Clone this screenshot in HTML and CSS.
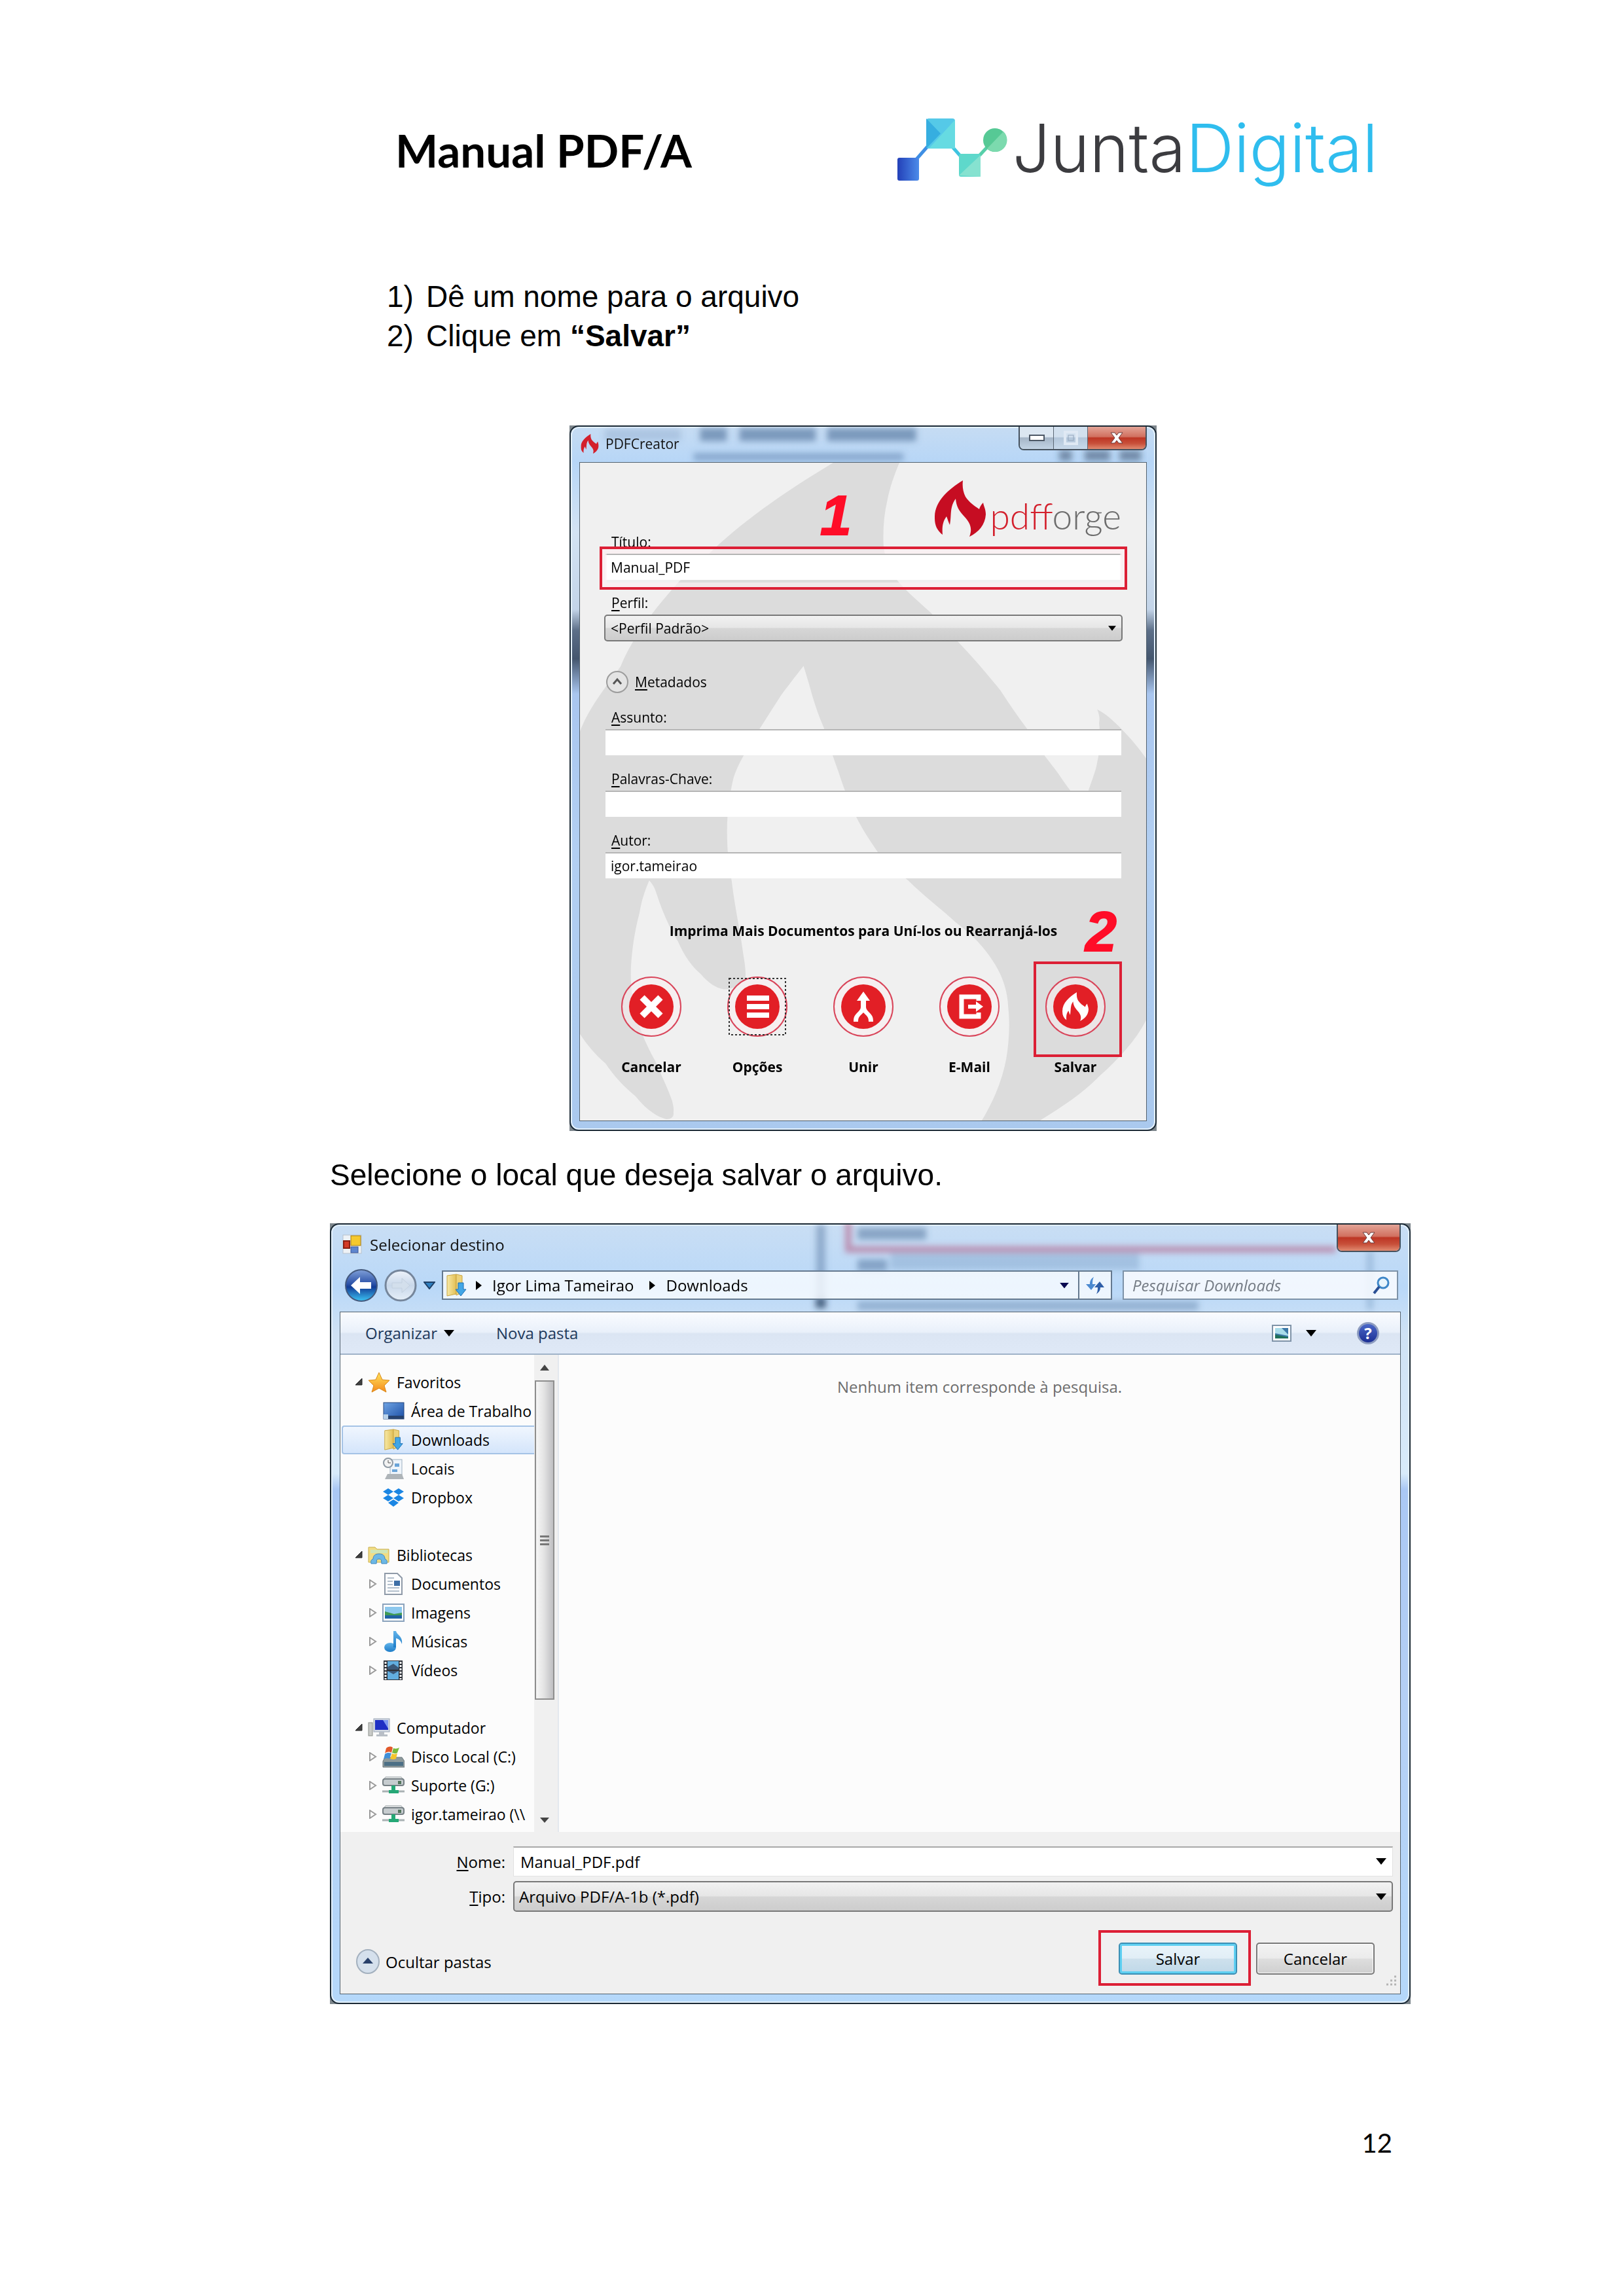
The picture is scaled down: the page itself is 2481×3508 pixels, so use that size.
FILE: index.html
```html
<!DOCTYPE html>
<html lang="pt-BR">
<head>
<meta charset="utf-8">
<meta name="viewport" content="width=device-width, initial-scale=1">
<title>Manual PDF/A</title>
<link rel="stylesheet" href="styles.css">
</head>
<body>
<svg class="defs" aria-hidden="true">
  <defs>
    <linearGradient id="gBlue" x1="0" y1="0" x2="1" y2="0"><stop offset="0" stop-color="#2340b8"/><stop offset="1" stop-color="#4c8cea"/></linearGradient>
    <linearGradient id="gBack" x1="0" y1="0" x2="0" y2="1"><stop offset="0" stop-color="#7f9fd8"/><stop offset=".45" stop-color="#2c52a8"/><stop offset=".55" stop-color="#123c96"/><stop offset="1" stop-color="#3cc4f4"/></linearGradient>
    <linearGradient id="gFwd" x1="0" y1="0" x2="0" y2="1"><stop offset="0" stop-color="#eef3fa"/><stop offset=".5" stop-color="#c9d8ea"/><stop offset="1" stop-color="#e6eff8"/></linearGradient>
    <linearGradient id="gFolder" x1="0" y1="0" x2="1" y2="0"><stop offset="0" stop-color="#f7e9a6"/><stop offset="1" stop-color="#e2bf55"/></linearGradient>
    <linearGradient id="gStar" x1="0" y1="0" x2="0" y2="1"><stop offset="0" stop-color="#ffe45c"/><stop offset="1" stop-color="#f58a1c"/></linearGradient>
    <linearGradient id="gScreen" x1="0" y1="0" x2="1" y2="1"><stop offset="0" stop-color="#6fa4e4"/><stop offset="1" stop-color="#1c4fa6"/></linearGradient>
    <linearGradient id="gNote" x1="0" y1="0" x2="0" y2="1"><stop offset="0" stop-color="#62b4ea"/><stop offset="1" stop-color="#1d7cc8"/></linearGradient>
    <filter id="soft" x="-20%" y="-60%" width="140%" height="220%"><feGaussianBlur stdDeviation="5"/></filter>
    <symbol id="flame" viewBox="0 0 78 86"><path d="M43 0C20 14-1 33 0 58c0 11 4 19 12 25-1-11 0-20 6-28 2 5 3 9 5 13 2-10 1-19 3-27 1-5 3-9 6-13 1 12 5 18 13 27 9 10 13 18 8 31 14-7 24-18 25-34 0-8-3-12-4-18-3 3-5 6-6 10-7-5-15-10-21-19C43 17 42 9 43 0z"/></symbol>
    <symbol id="download" viewBox="0 0 32 36"><path d="M2 3l14-2v30L2 34z" fill="url(#gFolder)" stroke="#c9a540"/><path d="M16 1l9 2v26l-9 4z" fill="#ecd27a" stroke="#c9a540"/><path d="M19 14h8v10h4l-8 10-8-10h4z" fill="#41a6e6" stroke="#1d6fb4"/></symbol>
    <symbol id="netdrive" viewBox="0 0 34 30"><path d="M5 2h24l4 5H1z" fill="#e8eaea" stroke="#9aa3a6"/><rect x="1" y="5" width="32" height="10" rx="3" fill="#c6cccf" stroke="#757f84" stroke-width="2"/><rect x="24" y="8" width="5" height="5" fill="#53755c"/><path d="M14 15h6v7h5v5H10v-5h4z" fill="#25a876"/><path d="M0 24h10M25 24h9" stroke="#a9b1b3" stroke-width="3"/></symbol>
    <symbol id="open" viewBox="0 0 12 12"><path d="M11 1v10H1z" fill="#404040" stroke="#222"/></symbol>
    <symbol id="shut" viewBox="0 0 12 14"><path d="M1 1l9 6-9 6z" fill="#fff" stroke="#9a9a9a" stroke-width="2"/></symbol>
    <symbol id="drop" viewBox="0 0 16 10"><path d="M0 0h16L8 10z"/></symbol>
  </defs>
</svg>

<main class="page">
  <header class="head">
    <h1>Manual PDF/A</h1>
    <div class="brand">
      <svg class="brand-mark" viewBox="1371 180 168 98" aria-hidden="true">
        <path d="M1388 257l49-56" stroke="#3f8fe4" stroke-width="5"/>
        <path d="M1437 204l44 50" stroke="#3fc4e0" stroke-width="5"/>
        <path d="M1481 254l39-42" stroke="#57cfa9" stroke-width="5"/>
        <rect x="1371" y="241" width="33" height="35" rx="3" fill="url(#gBlue)"/>
        <rect x="1415" y="181" width="44" height="46" rx="4" fill="#55c9e8"/>
        <path d="M1415 181l22 23-22 23z" fill="#36aee0"/><path d="M1459 183v44h-40z" fill="#66dbe2"/>
        <rect x="1465" y="235" width="33" height="35" rx="3" fill="#5ed8cb"/><path d="M1465 268l33-31v33z" fill="#86e2d0"/>
        <circle cx="1520" cy="214" r="18" fill="#56c995"/><path d="M1533 201a18 18 0 0 1-25 26z" fill="#7cdaae"/>
      </svg>
      <p class="brand-name">Junta<span>Digital</span></p>
    </div>
  </header>

  <ol class="steps">
    <li>Dê um nome para o arquivo</li>
    <li>Clique em <b>“Salvar”</b></li>
  </ol>

  <section class="corner creator">
    <div class="window">
      <div class="titlebar stack">
        <svg class="ghost" viewBox="0 0 893 54" preserveAspectRatio="none" aria-hidden="true">
          <g filter="url(#soft)"><path d="M40 12h120" stroke="#4d6f98" stroke-width="17" opacity=".2"/><path d="M190 12h42M252 12h120M390 12h140" stroke="#4d6f98" stroke-width="20" opacity=".6"/><path d="M180 46h330" stroke="#5b7ea8" stroke-width="12" opacity=".5"/><path d="M755 44h20M795 44h40M850 44h34" stroke="#2e435e" stroke-width="16" opacity=".5"/></g>
        </svg>
        <div class="bar">
          <svg class="app-flame" viewBox="0 0 78 86" aria-hidden="true"><use href="#flame" width="78" height="86"/></svg>
          <span class="caption">PDFCreator</span>
          <div class="sys">
            <button type="button" class="sys-btn" aria-label="Minimizar"><svg width="26" height="12" viewBox="0 0 26 12"><rect x="2" y="2" width="22" height="8" fill="#fff" stroke="#4d5866" stroke-width="2"/></svg></button>
            <button type="button" class="sys-btn pale" aria-label="Maximizar"><svg width="22" height="22" viewBox="0 0 22 22"><rect x="2" y="2" width="18" height="18" fill="none" stroke="#dfe9f4" stroke-width="4"/><rect x="7" y="7" width="8" height="8" fill="none" stroke="#93a5bb"/></svg></button>
            <button type="button" class="sys-btn close" aria-label="Fechar"><svg width="20" height="18" viewBox="0 0 20 18"><path d="M1 1h6l3 4 3-4h6l-6 8 6 8h-6l-3-4-3 4H1l6-8z" fill="#fff" stroke="#6b3a3a"/></svg></button>
          </div>
        </div>
      </div>
      <div class="client stack">
        <svg class="backdrop" viewBox="886 707 866 1003" preserveAspectRatio="none" aria-hidden="true">
          <path fill="#dcdcdc" fill-rule="evenodd" d="M1275 706C1200 750 1130 800 1083 846C1060 865 1048 878 1036 890C1000 930 965 975 948 1018C925 1050 900 1080 886 1117V1578C897 1595 910 1610 925 1623C940 1645 955 1660 971 1673C985 1690 1000 1703 1018 1708C1026 1708 1030 1704 1029 1698C1030 1690 1028 1685 1027 1680C1020 1660 1010 1640 1001 1619C985 1590 975 1565 971 1544C965 1520 963 1500 964 1476C966 1445 970 1420 977 1394C980 1375 985 1360 992 1344C996 1348 999 1353 1001 1358C1010 1385 1020 1412 1036 1437C1045 1458 1057 1475 1071 1487C1082 1500 1094 1508 1106 1510C1120 1510 1132 1503 1139 1494C1140 1480 1138 1470 1136 1458C1131 1420 1122 1380 1118 1344C1113 1320 1111 1295 1111 1269C1111 1240 1115 1212 1121 1187C1125 1175 1130 1165 1136 1154C1144 1140 1152 1126 1162 1111C1172 1095 1183 1078 1194 1061C1204 1048 1216 1032 1228 1017C1232 1030 1237 1046 1241 1061C1246 1078 1252 1095 1259 1111C1266 1135 1274 1158 1282 1180C1290 1205 1299 1227 1309 1248C1319 1268 1330 1284 1341 1300C1356 1318 1372 1331 1388 1344C1410 1366 1438 1387 1461 1408C1484 1425 1502 1443 1517 1466C1532 1488 1540 1512 1541 1537C1544 1565 1542 1592 1538 1616C1532 1648 1519 1680 1500 1711H1588C1622 1690 1656 1668 1682 1641C1710 1616 1736 1588 1752 1557V1158C1738 1138 1722 1120 1705 1104C1696 1095 1687 1088 1677 1083C1681 1092 1681 1098 1680 1104C1682 1122 1681 1138 1679 1154C1677 1164 1676 1172 1673 1180C1669 1192 1664 1205 1656 1232C1640 1212 1628 1197 1617 1180L1597 1154L1570 1113C1556 1094 1542 1074 1529 1054C1508 1028 1488 1005 1467 983L1423 936C1404 919 1385 903 1371 886C1362 873 1356 861 1353 847C1350 838 1350 828 1350 819C1350 800 1352 782 1356 765C1360 744 1367 725 1375 706Z"/>
        </svg>
        <form class="form">
          <div class="logo-row">
            <svg class="logo-flame" viewBox="0 0 78 86" aria-hidden="true"><use href="#flame" width="78" height="86"/></svg>
            <span class="logo-text"><span>pdf</span>forge</span>
          </div>
          <div class="field first">
            <label for="titulo">Título:</label>
            <input id="titulo" type="text" value="Manual_PDF">
            <span class="mark mark-title"></span>
            <span class="num num-one">1</span>
          </div>
          <div class="field perfil">
            <label for="perfil"><u>P</u>erfil:</label>
            <div class="pick stack">
              <select id="perfil"><option>&lt;Perfil Padrão&gt;</option></select>
              <svg class="drop" width="12" height="10"><use href="#drop" width="12" height="10"/></svg>
            </div>
          </div>
          <button type="button" class="meta">
            <svg width="36" height="36" viewBox="0 0 36 36" aria-hidden="true"><circle cx="18" cy="18" r="16" fill="#e4e4e4" stroke="#9c9c9c" stroke-width="2"/><path d="M12 21l6-7 6 7" fill="none" stroke="#555" stroke-width="3"/></svg>
            <span><u>M</u>etadados</span>
          </button>
          <div class="field"><label for="assunto"><u>A</u>ssunto:</label><input id="assunto" type="text"></div>
          <div class="field"><label for="chave"><u>P</u>alavras-Chave:</label><input id="chave" type="text"></div>
          <div class="field"><label for="autor"><u>A</u>utor:</label><input id="autor" type="text" value="igor.tameirao"></div>
          <p class="hint">Imprima Mais Documentos para Uní-los ou Rearranjá-los</p>
          <div class="actions">
            <button type="button" class="act"><svg viewBox="0 0 92 92"><circle class="ring" cx="46" cy="46" r="45"/><circle class="disc" cx="46" cy="46" r="34"/><path d="M32 32l28 28M60 32L32 60" stroke="#fff" stroke-width="10"/></svg>Cancelar</button>
            <button type="button" class="act"><svg viewBox="0 0 92 92"><circle class="ring" cx="46" cy="46" r="45"/><circle class="disc" cx="46" cy="46" r="34"/><path d="M30 33h34M30 46h34M30 59h34" stroke="#fff" stroke-width="8"/><rect x="3" y="3" width="86" height="86" fill="none" stroke="#333" stroke-width="2" stroke-dasharray="3 3"/></svg>Opções</button>
            <button type="button" class="act"><svg viewBox="0 0 92 92"><circle class="ring" cx="46" cy="46" r="45"/><circle class="disc" cx="46" cy="46" r="34"/><path d="M46 23l10 14h-6v10c0 3 3 6 6 9 4 4 5 7 5 13h-7c0-5-1-7-4-10l-4-4-4 4c-3 3-4 5-4 10h-7c0-6 1-9 5-13 3-3 6-6 6-9V37h-6z" fill="#fff"/></svg>Unir</button>
            <button type="button" class="act"><svg viewBox="0 0 92 92"><circle class="ring" cx="46" cy="46" r="45"/><circle class="disc" cx="46" cy="46" r="34"/><path d="M60 37v-6H34v30h26v-6" fill="none" stroke="#fff" stroke-width="7"/><path d="M44 43h12v-5l11 8-11 8v-5H44z" fill="#fff"/></svg>E-Mail</button>
            <button type="button" class="act"><svg viewBox="0 0 92 92"><circle class="ring" cx="46" cy="46" r="45"/><circle class="disc" cx="46" cy="46" r="34"/><use href="#flame" x="26" y="24" width="40" height="44" fill="#fff"/></svg>Salvar<span class="mark mark-save"></span><span class="num num-two">2</span></button>
          </div>
        </form>
      </div>
    </div>
  </section>

  <p class="lead">Selecione o local que deseja salvar o arquivo.</p>

  <section class="corner dialog">
    <div class="window">
      <div class="glass stack">
        <svg class="ghost" viewBox="0 0 1619 133" preserveAspectRatio="none" aria-hidden="true">
          <g filter="url(#soft)"><path d="M734 0v125" stroke="#5c7fa6" stroke-width="14" opacity=".5"/><path d="M734 112v16" stroke="#1f3550" stroke-width="16" opacity=".6"/><path d="M776-5v43h744" fill="none" stroke="#b4567e" stroke-width="10" opacity=".55"/><path d="M790 14h105M790 62h45" stroke="#4d6f98" stroke-width="18" opacity=".5"/><path d="M840 56h380" stroke="#6f93bb" stroke-width="26" opacity=".35"/><path d="M790 124h520" stroke="#5c7fa6" stroke-width="14" opacity=".45"/><path d="M1572 40v90" stroke="#6f93bb" stroke-width="10" opacity=".4"/></g>
        </svg>
        <div class="glass-rows">
          <div class="bar">
            <svg class="app-icon" viewBox="0 0 30 30" aria-hidden="true"><rect x="1" y="1" width="28" height="28" fill="#eef2f6" stroke="#b8c2cc"/><rect x="13" y="2" width="15" height="15" fill="#f6c92e" stroke="#a37c13"/><rect x="2" y="10" width="9" height="11" fill="#d33a28" stroke="#8a1f14" stroke-width="2"/><rect x="13" y="19" width="11" height="9" fill="#5e86cf" stroke="#39579a"/></svg>
            <span class="caption">Selecionar destino</span>
            <div class="sys">
              <button type="button" class="sys-btn close" aria-label="Fechar"><svg width="20" height="20" viewBox="0 0 20 18"><path d="M1 1h6l3 4 3-4h6l-6 8 6 8h-6l-3-4-3 4H1l6-8z" fill="#fff" stroke="#6b3a3a"/></svg></button>
            </div>
          </div>
          <div class="nav">
            <button type="button" class="round" aria-label="Voltar"><svg viewBox="0 0 50 50"><circle cx="25" cy="25" r="24" fill="url(#gBack)" stroke="#44597d" stroke-width="2"/><path d="M9 25l14-13v8h17v10H23v8z" fill="#fff"/></svg></button>
            <button type="button" class="round" aria-label="Avançar"><svg viewBox="0 0 50 50"><circle cx="25" cy="25" r="23" fill="url(#gFwd)" stroke="#76869b" stroke-width="3"/><path d="M39 25L27 14v7H12v8h15v7z" fill="#d3dfec" stroke="#c3d0df"/></svg></button>
            <button type="button" class="recent" aria-label="Locais recentes"><svg viewBox="0 0 18 12"><path d="M1 1h16L9 11z" fill="#2f7fc0" stroke="#1e3f66" stroke-width="2"/></svg></button>
            <div class="address">
              <svg class="i-folder" viewBox="0 0 32 36"><use href="#download" width="32" height="36"/></svg>
              <svg class="crumb" viewBox="0 0 9 14"><path d="M0 0l9 7-9 7z"/></svg>
              <a href="#">Igor Lima Tameirao</a>
              <svg class="crumb" viewBox="0 0 9 14"><path d="M0 0l9 7-9 7z"/></svg>
              <a href="#">Downloads</a>
              <svg class="addr-drop" viewBox="0 0 16 10" fill="#0a0a50"><use href="#drop" width="16" height="10"/></svg>
              <button type="button" class="refresh" aria-label="Atualizar"><svg viewBox="0 0 30 28"><path d="M13 1C8 4 7 8 7 12H1l8 9 7-9h-5c0-4 0-7 2-11z" fill="#4b8ad0"/><path d="M17 27c5-3 6-7 6-10h6l-7-9-8 9h5c0 3 0 6-2 10z" fill="#2f5fa8"/></svg></button>
            </div>
            <label class="search"><input type="search" placeholder="Pesquisar Downloads" aria-label="Pesquisar Downloads"><svg viewBox="0 0 28 28"><circle cx="17" cy="10" r="8" fill="#e8f4fc" stroke="#3f87c8" stroke-width="3"/><path d="M11 16L3 26" stroke="#2a4f94" stroke-width="4"/></svg></label>
          </div>
        </div>
      </div>

      <div class="client">
        <div class="toolbar">
          <button type="button">Organizar <svg viewBox="0 0 16 10"><use href="#drop" width="16" height="10"/></svg></button>
          <button type="button">Nova pasta</button>
          <div class="tools">
            <button type="button" aria-label="Modo de exibição"><svg class="i-view" viewBox="0 0 30 26"><rect x="1" y="1" width="28" height="24" fill="#fff" stroke="#7f93a8" stroke-width="2"/><rect x="5" y="5" width="20" height="16" fill="#3d78a8"/><path d="M5 5h10l10 10v2L5 13z" fill="#a9dcea"/><path d="M5 15l20 4v2H5z" fill="#20705a"/></svg><svg viewBox="0 0 16 10"><use href="#drop" width="16" height="10"/></svg></button>
            <button type="button" class="help" aria-label="Ajuda">?</button>
          </div>
        </div>

        <div class="body">
          <nav class="tree">
            <a class="row top" href="#"><svg class="tw"><use href="#open" width="12" height="12"/></svg><svg class="ic" viewBox="0 0 34 32"><path d="M17 1l5 11 11 1-8 8 3 10-11-6-11 6 3-10-8-8 11-1z" fill="url(#gStar)" stroke="#d98a1a"/></svg>Favoritos</a>
            <a class="row" href="#"><svg class="tw"></svg><svg class="ic" viewBox="0 0 34 28"><rect x="2" y="1" width="31" height="25" fill="url(#gScreen)" stroke="#24477f"/><path d="M2 21h31v5H2z" fill="#27436f"/><path d="M2 19h7v7H2z" fill="#b9d2ea"/></svg>Área de Trabalho</a>
            <a class="row selected" href="#"><svg class="tw"></svg><svg class="ic" viewBox="0 0 32 36"><use href="#download" width="32" height="36"/></svg>Downloads</a>
            <a class="row" href="#"><svg class="tw"></svg><svg class="ic" viewBox="0 0 34 34"><rect x="12" y="3" width="18" height="24" fill="#eef4fa" stroke="#9db0c0"/><path d="M4 33l4-8h22l3 8z" fill="#aeb4b8"/><path d="M19 9h7v5h-7zM15 18h8v4h-8z" fill="#6aa4d8"/><circle cx="9" cy="8" r="7" fill="#f3f3f3" stroke="#8f9aa4" stroke-width="2"/><path d="M9 4v4h4" fill="none" stroke="#555"/></svg>Locais</a>
            <a class="row" href="#"><svg class="tw"></svg><svg class="ic" viewBox="0 0 34 30" fill="#1b86e3"><path d="M9 1l8 5-8 5-8-5zM25 1l8 5-8 5-8-5zM9 11l8 5-8 5-8-5zM25 11l8 5-8 5-8-5zM17 18l8 5-8 6-8-6z"/></svg>Dropbox</a>
            <span class="row"></span>
            <a class="row top" href="#"><svg class="tw"><use href="#open" width="12" height="12"/></svg><svg class="ic" viewBox="0 0 34 30"><path d="M1 3h10l3 3h18v20H1z" fill="#f1dd84" stroke="#c9ae4c"/><path d="M4 7h26v5H4z" fill="#cfe6b8"/><path d="M5 28c-1-4 0-6 3-7 0-5 3-8 9-8s9 3 9 8c3 1 4 3 3 7h-8c-1-4 1-7-4-7s-3 3-4 7z" fill="#6cb8e6" stroke="#3d86be"/></svg>Bibliotecas</a>
            <a class="row" href="#"><svg class="tw"><use href="#shut" width="12" height="14"/></svg><svg class="ic" viewBox="0 0 34 34"><path d="M4 1h19l7 7v25H4z" fill="#fcfdff" stroke="#8f9aa8" stroke-width="2"/><path d="M8 8h10M8 13h8M8 18h8M8 23h18M8 28h18" stroke="#b4c0cc" stroke-width="2"/><rect x="18" y="12" width="9" height="8" fill="#3e6fa6"/></svg>Documentos</a>
            <a class="row" href="#"><svg class="tw"><use href="#shut" width="12" height="14"/></svg><svg class="ic" viewBox="0 0 34 28"><rect x="1" y="1" width="32" height="26" fill="#fff" stroke="#8aa2bc" stroke-width="2"/><rect x="4" y="5" width="26" height="18" fill="#8cc8ee"/><path d="M4 12l14 4 12-2v4H4z" fill="#3f9a55"/><path d="M4 18h26v5H4z" fill="#1f62a4"/></svg>Imagens</a>
            <a class="row" href="#"><svg class="tw"><use href="#shut" width="12" height="14"/></svg><svg class="ic" viewBox="0 0 34 34"><ellipse cx="12" cy="26" rx="9" ry="7" fill="url(#gNote)"/><path d="M17 26V1h4c1 6 11 8 9 20-2-6-5-8-9-9v14z" fill="url(#gNote)"/></svg>Músicas</a>
            <a class="row" href="#"><svg class="tw"><use href="#shut" width="12" height="14"/></svg><svg class="ic" viewBox="0 0 34 32"><rect x="2" y="1" width="29" height="30" fill="#2b2f36"/><rect x="8" y="2" width="17" height="13" fill="#62aee0"/><rect x="8" y="17" width="17" height="13" fill="#62aee0"/><path d="M8 11l9-5 8 6v3H8zM8 17h17l-8 5z" fill="#3a5878"/><path d="M5 3v27M28 3v27" stroke="#fff" stroke-width="3" stroke-dasharray="3 2"/></svg>Vídeos</a>
            <span class="row"></span>
            <a class="row top" href="#"><svg class="tw"><use href="#open" width="12" height="12"/></svg><svg class="ic" viewBox="0 0 34 30"><rect x="1" y="7" width="6" height="20" fill="#c9cbc8" stroke="#8c908c"/><rect x="9" y="1" width="24" height="20" fill="#d4dae4" stroke="#9aa6b6"/><rect x="11" y="3" width="20" height="15" fill="#1f2fc4"/><path d="M23 3h8v13z" fill="#7f9af0"/><path d="M17 21h8v4h5v3H13v-3h4z" fill="#b8bec6"/></svg>Computador</a>
            <a class="row" href="#"><svg class="tw"><use href="#shut" width="12" height="14"/></svg><svg class="ic" viewBox="0 0 34 34"><path d="M4 18h26l4 6v9H1v-9z" fill="#8e9a9c" stroke="#69757a"/><path d="M3 25h29v6H3z" fill="#4c6f86"/><path d="M6 4c4-3 7-3 10-1l-2 8c-3-2-6-2-10 1z" fill="#e2592b"/><path d="M17 4c3 1 6 1 9-1l-3 8c-3 2-5 1-8 0z" fill="#79b93c"/><path d="M4 13c4-3 7-2 10-1l-3 8c-3-1-6-1-9 1z" fill="#3f8fd8"/><path d="M15 12c3 2 5 1 8 0l-2 8c-4 2-6 1-9 0z" fill="#f4c42c"/></svg>Disco Local (C:)</a>
            <a class="row" href="#"><svg class="tw"><use href="#shut" width="12" height="14"/></svg><svg class="ic" viewBox="0 0 34 30"><use href="#netdrive" width="34" height="30"/></svg>Suporte (G:)</a>
            <a class="row" href="#"><svg class="tw"><use href="#shut" width="12" height="14"/></svg><svg class="ic" viewBox="0 0 34 30"><use href="#netdrive" width="34" height="30"/></svg>igor.tameirao (\\</a>
          </nav>
          <div class="scroll" aria-hidden="true">
            <svg viewBox="0 0 14 10"><path d="M0 9h14L7 0z" fill="#444"/></svg>
            <div class="thumb"><i></i><i></i><i></i></div>
            <svg class="down" viewBox="0 0 14 8"><path d="M0 0h14L7 8z" fill="#444"/></svg>
          </div>
          <p class="empty">Nenhum item corresponde à pesquisa.</p>
        </div>

        <form class="save">
          <div class="save-grid">
            <label for="nome"><u>N</u>ome:</label>
            <div class="pick stack"><input id="nome" type="text" value="Manual_PDF.pdf"><svg class="drop" width="16" height="10"><use href="#drop" width="16" height="10"/></svg></div>
            <label for="tipo"><u>T</u>ipo:</label>
            <div class="pick stack"><select id="tipo"><option>Arquivo PDF/A-1b (*.pdf)</option></select><svg class="drop" width="16" height="10"><use href="#drop" width="16" height="10"/></svg></div>
          </div>
          <div class="save-row">
            <button type="button" class="hide"><svg viewBox="0 0 36 38"><ellipse cx="18" cy="19" rx="17" ry="18" fill="#d5e0ec" stroke="#a3b0be" stroke-width="2"/><path d="M10 22h16l-8-9z" fill="#28406a"/></svg>Ocultar pastas</button>
            <div class="default"><button type="button" class="btn primary">Salvar</button><span class="mark mark-ok"></span></div>
            <button type="button" class="btn">Cancelar</button>
            <svg class="grip" viewBox="0 0 18 18"><path d="M14 2h3M14 8h3M14 14h3M8 8h3M8 14h3M2 14h3" stroke="#b4b4b4" stroke-width="3"/></svg>
          </div>
        </form>
      </div>
    </div>
  </section>

  <footer class="folio">12</footer>
</main>
</body>
</html>
```
FILE: styles.css
```css
* { box-sizing: border-box; }
body { margin: 0; background: #fff; color: #000; font-family: "Liberation Sans", Arial, sans-serif; }
button, input, select { font: inherit; color: inherit; margin: 0; }
button { border: 0; padding: 0; background: none; }
a { color: inherit; text-decoration: none; }
p, h1 { margin: 0; }
svg { display: block; flex: none; }
u { text-underline-offset: 3px; }
.defs { position: absolute; width: 0; height: 0; }
.stack { display: grid; }
.stack > * { grid-area: 1 / 1; min-width: 0; }

.page { min-height: 100vh; padding: 170px 326px 0 504px; }

/* Document header */
.head { display: flex; justify-content: space-between; height: 120px; padding: 0 50px 0 100px; }
.head h1 { font: 700 69px/120px Lato, sans-serif; }
.brand { display: flex; gap: 8px; }
.brand-mark { width: 168px; height: 98px; margin-top: 10px; }
.brand-name { font: 300 102px/112px Inter, Lato, sans-serif; color: #3c3c40; }
.brand-name span { color: #2fbdee; }

.steps { margin: 133px 0 0; padding: 0 0 0 87px; list-style: none; counter-reset: step; font-size: 46px; line-height: 60px; }
.steps li { display: flex; white-space: pre; counter-increment: step; }
.steps li::before { content: counter(step) ")"; width: 60px; }
.lead { margin: 37px 0 44px; font-size: 46px; line-height: 60px; }

/* Window chrome */
.corner { background: #7d868c; }
.window { border: 2px solid #1c2a35; border-radius: 14px; padding: 0 13px 13px; box-shadow: inset 0 0 0 2px #e4f1fd; }
.window, .caption { font-family: "Open Sans", "Noto Sans", sans-serif; }
.ghost { width: 100%; height: 100%; overflow: hidden; }
.bar { display: flex; align-items: center; }
.caption { flex: 1; color: #111; }
.sys { display: flex; align-self: flex-start; border: 2px solid #46525f; border-top: 0; border-radius: 0 0 8px 8px; overflow: hidden; }
.sys-btn { display: grid; place-items: center; width: 52px; height: 34px; background: linear-gradient(#dbe6f1 0 45%, #a5b5c7 50%, #c2d3e4); border-right: 1px solid #5b6774; }
.sys-btn.pale { background: linear-gradient(#d2e0ee 0 45%, #b3c6da 50%, #c8d9ea); }
.sys-btn.close { width: 88px; border: 0; background: linear-gradient(#e3a497, #d1705f 45%, #bd3524 50%, #c8503a 75%, #e08a70); }
.client { border: 1px solid #53626f; background: #f0f0f0; }
.mark { position: absolute; border: 4px solid #dc1f35; pointer-events: none; }
.drop { align-self: center; justify-self: end; pointer-events: none; }

/* PDFCreator window */
.creator { width: 897px; margin: 107px 0 0 366px; font-size: 21px; }
.creator .window { background: linear-gradient(#c6dcf3 0, #b7d6f7 5%, #d3e3f3 15%, #c3d4e8 26%, #5c6f88 29%, #44566e 33%, #a9c6ef 38%, #b2cff2 60%, #aac9ee 100%); }
.creator .titlebar { height: 54px; }
.creator .bar { height: 52px; }
.creator .caption { padding-left: 10px; }
.app-flame { width: 28px; height: 30px; margin-left: 2px; fill: #d3202c; }
.backdrop { width: 100%; height: 100%; }
.form { display: flex; flex-direction: column; align-items: stretch; padding: 0 38px 70px 39px; }
.logo-row { display: flex; height: 109px; padding-top: 27px; justify-content: flex-end; gap: 6px; }
.logo-flame { width: 80px; height: 86px; fill: #c60d22; }
.logo-text { font: 300 55px/80px Lato, sans-serif; padding-top: 14px; color: #6d6d6d; }
.logo-text span { color: #d3202c; }
.field { position: relative; display: grid; gap: 6px; margin-bottom: 24px; line-height: 24px; }
.field label { padding-left: 9px; }
.field input { width: 100%; height: 40px; border: 0; border-top: 2px solid #b5b5b5; padding: 0 8px; background: #fff; }
.field.first { margin-bottom: 23px; }
.field.perfil { margin-bottom: 44px; }
.pick select { appearance: none; width: 100%; border: 2px solid #787878; border-radius: 5px; background: linear-gradient(#f2f2f2, #e6e6e6 48%, #d6d6d6 52%, #cdcdcd); }
.field .pick { margin: 0 -2px; }
.field select { height: 41px; padding: 0 8px; }
.field .drop { margin-right: 10px; }
.mark-title { inset: 19px -9px -15px -9px; box-shadow: inset 0 0 0 7px rgb(255 240 244 / .6); }
.num { position: absolute; font: italic 700 86px/62px "Liberation Sans", Arial, sans-serif; color: #ff0d28; -webkit-text-stroke: 2px #ff0d28; }
.num-one { left: 328px; top: -60px; }
.meta { display: flex; align-items: center; align-self: flex-start; gap: 9px; height: 36px; margin-bottom: 24px; }
.hint { margin-top: 42px; text-align: center; font-weight: 700; line-height: 28px; white-space: nowrap; }
.actions { display: grid; grid-template-columns: repeat(5, 162px); justify-content: center; margin-top: 56px; }
.act { position: relative; display: grid; justify-items: center; gap: 34px; font-weight: 700; line-height: 24px; }
.act svg { width: 92px; height: 92px; }
.ring { fill: #fbeef0; fill-opacity: .5; stroke: #d9455a; stroke-width: 2; }
.disc { fill: #e21f26; }
.mark-save { left: 17px; top: -23px; width: 135px; height: 146px; }
.num-two { left: 96px; top: -100px; }

/* Save dialog */
.dialog { font-size: 24px; }
.dialog .window { background: linear-gradient(#c9def4 0, #b9d8f8 8%, #cfe2f5 14%, #d8ebfa 32%, #aac8f5 34%, #b4cff5 60%, #b5d8fa 100%); }
.dialog .bar { height: 60px; }
.app-icon { width: 30px; height: 30px; margin-left: 4px; }
.dialog .caption { padding-left: 12px; }
.dialog .close { height: 40px; width: 94px; }
.nav { display: flex; align-items: center; height: 73px; padding: 6px 4px 14px 8px; gap: 10px; }
.round { width: 50px; height: 50px; }
.recent { width: 18px; }
.address { flex: 1; display: flex; align-items: center; height: 45px; padding-left: 4px; border: 2px solid #64798f; background: rgb(250 252 255 / .8); }
.i-folder { width: 32px; height: 36px; margin-right: 14px; }
.crumb { width: 9px; height: 14px; margin-right: 16px; }
.address a { margin-right: 24px; white-space: nowrap; }
.addr-drop { width: 14px; height: 10px; margin: 0 14px 0 auto; }
.refresh { display: grid; place-items: center; align-self: stretch; width: 50px; border-left: 2px solid #64798f; }
.refresh svg { width: 30px; }
.search { display: flex; align-items: center; width: 421px; height: 45px; margin-left: 6px; padding: 0 10px 0 13px; border: 2px solid #7d92a8; background: rgb(250 252 255 / .85); }
.search input { flex: 1; min-width: 0; border: 0; padding: 0; background: none; font-style: italic; }
.search input::placeholder { color: #747b84; opacity: 1; }
.search svg { width: 28px; }

.toolbar { display: flex; align-items: center; gap: 64px; height: 65px; padding: 0 32px 0 38px; border-bottom: 2px solid #9fb2c8; background: linear-gradient(#fafcff, #e9f0fa 48%, #dbe5f3 52%, #dfe9f7); color: #1e395b; }
.toolbar button { display: flex; align-items: center; gap: 10px; }
.toolbar button svg { width: 16px; height: 10px; }
.tools { display: flex; gap: 62px; margin-left: auto; }
.toolbar .tools button { gap: 22px; }
.toolbar .i-view { width: 30px; height: 26px; }
.toolbar .help { justify-content: center; width: 34px; height: 34px; border: 3px solid #8d9cc0; border-radius: 50%; background: linear-gradient(#4a68c8, #1c2f94); color: #fff; font-weight: 700; line-height: 28px; }

.body { display: grid; grid-template-columns: 296px 38px 1fr; background: #fcfcfc; }
.tree { padding: 20px 0 5px 2px; font-size: 23px; }
.row { display: flex; align-items: center; height: 44px; padding-left: 40px; white-space: nowrap; border: 2px solid transparent; border-right: 0; }
.row.top { padding-left: 18px; }
.row.selected { border-color: #a5c3e6; border-radius: 4px 0 0 4px; background: linear-gradient(#f0f6fe, #d4e5fb); }
.tw { width: 12px; height: 14px; margin-right: 8px; }
.ic { width: 34px; height: 34px; margin-right: 10px; }
.scroll { display: flex; flex-direction: column; align-items: center; padding: 15px 5px 14px 1px; background: #f0f0f0; border-right: 2px solid #e3e8ee; }
.scroll svg { width: 14px; height: 10px; }
.thumb { display: grid; align-content: center; justify-items: center; gap: 3px; width: 100%; height: 488px; margin-top: 14px; border: 2px solid #8e8e8e; background: linear-gradient(90deg, #f6f6f6, #e4e4e4 45%, #bfbfc2); }
.thumb i { width: 14px; height: 3px; background: #777; }
.scroll .down { margin-top: auto; height: 8px; }
.empty { padding-top: 34px; text-align: center; color: #6d6d6d; line-height: 30px; }

.save { padding: 22px 11px 0 0; }
.save-grid { display: grid; grid-template-columns: 252px 1fr; gap: 7px 12px; align-items: center; }
.save-grid label { text-align: right; }
.save-grid input { width: 100%; height: 46px; border: 1px solid #e2e2e2; border-top: 2px solid #a9a9a9; padding: 0 10px; background: #fff; }
.save-grid select { height: 47px; padding: 0 7px; }
.save-grid .drop { margin-right: 10px; }
.save-row { display: flex; align-items: flex-start; height: 78px; margin-top: 47px; padding-left: 24px; }
.hide { display: flex; align-items: center; gap: 9px; height: 58px; margin-right: auto; }
.hide svg { width: 36px; height: 38px; }
.btn { width: 181px; height: 49px; border: 2px solid #787878; border-radius: 5px; background: linear-gradient(#f3f3f3, #ebebeb 48%, #dddddd 52%, #cfcfcf); box-shadow: inset 0 0 0 1px #fff; }
.btn.primary { border-color: #3c8fb4; background: linear-gradient(#eaf4fa, #e1eef6 48%, #cde0ec 52%, #bfd8e8); box-shadow: inset 0 0 0 3px #5fd0f2; }
.default { position: relative; margin-right: 29px; }
.mark-ok { inset: -19px -21px -17px -31px; }
.grip { width: 18px; height: 18px; margin: 0 -6px 10px 16px; align-self: flex-end; }

.folio { margin-top: 182px; padding-right: 28px; text-align: right; font: 400 40px/60px Lato, sans-serif; }
```
